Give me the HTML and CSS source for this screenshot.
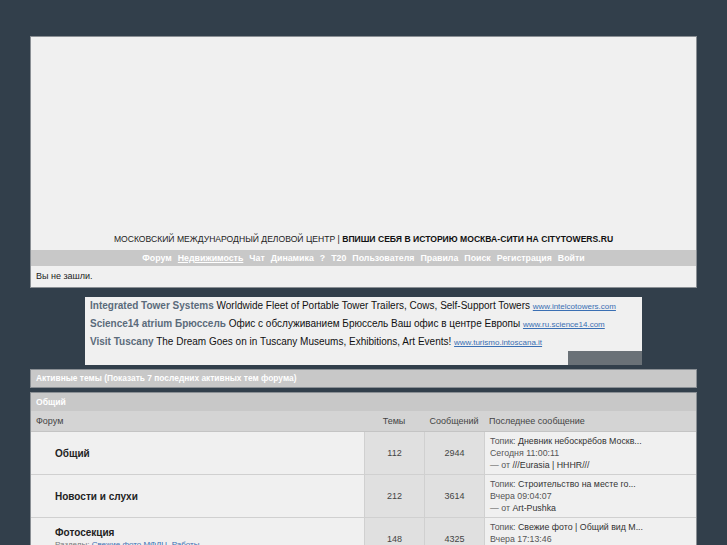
FILE: index.html
```html
<!DOCTYPE html>
<html lang="ru">
<head>
<meta charset="utf-8">
<title>Форум</title>
<link rel="stylesheet" href="styles.css">
</head>
<body>
<div class="page">
  <div class="header">
    <div class="banner"></div>
    <div class="title">МОСКОВСКИЙ МЕЖДУНАРОДНЫЙ ДЕЛОВОЙ ЦЕНТР | <b>ВПИШИ СЕБЯ В ИСТОРИЮ МОСКВА-СИТИ НА CITYTOWERS.RU</b></div>
    <div class="nav">
      <a>Форум</a><a class="u">Недвижимость</a><a>Чат</a><a>Динамика</a><a>?</a><a>T20</a><a>Пользователя</a><a>Правила</a><a>Поиск</a><a>Регистрация</a><a>Войти</a>
    </div>
    <div class="status">Вы не зашли.</div>
  </div>

  <div class="ads">
    <div class="ad"><span class="ad-t">Integrated Tower Systems</span> Worldwide Fleet of Portable Tower Trailers, Cows, Self-Support Towers <a class="ad-l">www.intelcotowers.com</a></div>
    <div class="ad"><span class="ad-t">Science14 atrium Брюссель</span> Офис с обслуживанием Брюссель Ваш офис в центре Европы <a class="ad-l">www.ru.science14.com</a></div>
    <div class="ad"><span class="ad-t">Visit Tuscany</span> The Dream Goes on in Tuscany Museums, Exhibitions, Art Events! <a class="ad-l">www.turismo.intoscana.it</a></div>
    <div class="ad-corner"></div>
  </div>

  <div class="bar">Активные темы (Показать 7 последних активных тем форума)</div>

  <div class="cat">
    <div class="cat-h">Общий</div>
    <div class="grid">
      <div class="th th-f">Форум</div>
      <div class="th th-c">Темы</div>
      <div class="th th-c">Сообщений</div>
      <div class="th th-l">Последнее сообщение</div>

      <div class="td f"><span class="fname">Общий</span></div>
      <div class="td n">112</div>
      <div class="td n">2944</div>
      <div class="td l"><div><span class="g">Топик:</span> Дневник небоскрёбов Москв...</div><div class="g">Сегодня 11:00:11</div><div><span class="g">— от</span> ///Eurasia | HHHR///</div></div>

      <div class="td f"><span class="fname">Новости и слухи</span></div>
      <div class="td n">212</div>
      <div class="td n">3614</div>
      <div class="td l"><div><span class="g">Топик:</span> Строительство на месте го...</div><div class="g">Вчера 09:04:07</div><div><span class="g">— от</span> Art-Pushka</div></div>

      <div class="td f f3"><span class="fname">Фотосекция</span><div class="desc">Разделы: <a>Свежие фото МФДЦ</a>, <a>Работы</a></div></div>
      <div class="td n">148</div>
      <div class="td n">4325</div>
      <div class="td l"><div><span class="g">Топик:</span> Свежие фото | Общий вид М...</div><div class="g">Вчера 17:13:46</div><div><span class="g">— от</span> Pavel</div></div>
    </div>
  </div>
</div>
</body>
</html>
```

FILE: styles.css
```css
html, body {
  margin: 0;
  padding: 0;
}
body {
  background: #323f4b;
  font-family: "Liberation Sans", Arial, sans-serif;
  font-size: 10px;
  color: #333;
  overflow: hidden;
}
.page {
  width: 667px;
  margin: 36px 0 0 30px;
}
.header {
  background: #f0f0f0;
  border: 1px solid #8a8f94;
}
.banner {
  height: 196px;
}
.title {
  text-align: center;
  font-size: 8.6px;
  color: #222;
  line-height: 12px;
  height: 17px;
}
.title b {
  color: #111;
}
.nav {
  background: #c8c8c8;
  height: 16px;
  line-height: 16px;
  text-align: center;
  font-size: 8.8px;
  font-weight: bold;
}
.nav a {
  color: #fff;
  margin: 0 3px;
}
.nav a.u {
  text-decoration: underline;
}
.status {
  height: 21px;
  line-height: 20px;
  padding-left: 5px;
  font-size: 9px;
  color: #222;
}
.ads {
  position: relative;
  margin: 9px 0 0 55px;
  width: 557px;
  height: 68px;
  background: #f0f0f0;
  box-sizing: border-box;
}
.ad {
  height: 18px;
  line-height: 17px;
  padding-left: 5px;
  font-size: 10px;
  color: #111;
  white-space: nowrap;
}
.ad-t {
  color: #5b6b7b;
  font-weight: bold;
}
.ad-l {
  color: #3a6fb3;
  text-decoration: underline;
  font-size: 8px;
}
.ad-corner {
  position: absolute;
  right: 0;
  bottom: 0;
  width: 74px;
  height: 14px;
  background: #6a7177;
}
.bar {
  margin-top: 4px;
  background: #c8c8c8;
  border: 1px solid #8a8f94;
  height: 17px;
  line-height: 17px;
  color: #fff;
  font-weight: bold;
  font-size: 8.4px;
  padding-left: 5px;
}
.cat {
  margin-top: 4px;
  border: 1px solid #8a8f94;
  background: #f0f0f0;
}
.cat-h {
  background: #c8c8c8;
  height: 18px;
  line-height: 18px;
  color: #fff;
  font-weight: bold;
  font-size: 8.6px;
  padding-left: 5px;
}
.grid {
  display: grid;
  grid-template-columns: 333px 60px 60px 1fr;
}
.th {
  background: #d4d4d4;
  height: 20px;
  line-height: 20px;
  font-size: 9px;
  color: #444;
  border-bottom: 1px solid #c4c4c4;
}
.th-f { padding-left: 5px; }
.th-c { text-align: center; }
.th-l { padding-left: 5px; }
.td {
  height: 43px;
  border-bottom: 1px solid #d0d0d0;
  box-sizing: border-box;
}
.f {
  padding-left: 24px;
  display: flex;
  flex-direction: column;
  justify-content: center;
}
.f3 {
  justify-content: flex-start;
  padding-top: 9px;
}
.fname {
  font-weight: bold;
  font-size: 10px;
  color: #222;
}
.desc {
  font-size: 8px;
  color: #777;
  margin-top: 2px;
}
.desc a {
  color: #3a6fb3;
}
.n {
  background: #e0e0e0;
  border-left: 1px solid #d0d0d0;
  text-align: center;
  line-height: 42px;
  font-size: 9px;
  color: #444;
}
.l {
  border-left: 1px solid #d0d0d0;
  padding: 3px 5px;
  font-size: 8.8px;
  line-height: 12px;
  color: #333;
}
.l .g {
  color: #555;
}
```
